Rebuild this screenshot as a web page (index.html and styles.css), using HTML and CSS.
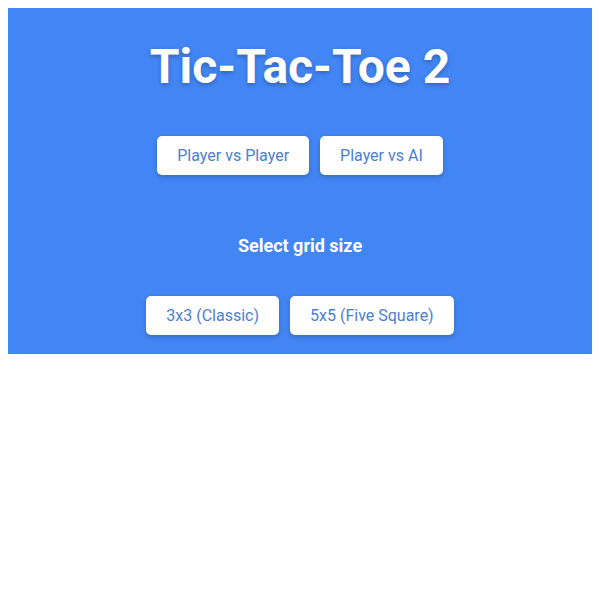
FILE: index.html
```html
<!DOCTYPE html>
<html lang="en">
<head>
<meta charset="utf-8">
<title>Tic-Tac-Toe 2</title>
<link rel="stylesheet" href="styles.css">
</head>
<body>
  <div class="menu">
    <h1 class="title">Tic-Tac-Toe 2</h1>
    <div class="options">
      <button class="btn">Player vs Player</button>
      <button class="btn">Player vs AI</button>
    </div>
    <h2 class="subtitle">Select grid size</h2>
    <div class="options">
      <button class="btn">3x3 (Classic)</button>
      <button class="btn">5x5 (Five Square)</button>
    </div>
  </div>
</body>
</html>
```
FILE: styles.css
```css
body {
  margin: 8px;
  font-family: Roboto, "Liberation Sans", sans-serif;
  background: #fff;
}

.menu {
  background: #4285f4;
  color: #fff;
  text-align: center;
  padding: 20px 20px 19px;
}

.title {
  font-size: 48px;
  font-weight: 700;
  margin: 10px 0 41px;
  text-shadow: 0 2px 4px rgba(0, 0, 0, 0.25);
}

.subtitle {
  font-size: 18px;
  font-weight: 700;
  margin: 60px 0 40px;
}

.options {
  display: flex;
  justify-content: center;
  gap: 11px;
}

.btn {
  font-family: Roboto, "Liberation Sans", sans-serif;
  font-size: 16px;
  color: #4a7fd6;
  background: #fff;
  border: none;
  border-radius: 5px;
  padding: 10px 20px;
  box-shadow: 0 2px 5px rgba(0, 0, 0, 0.2);
  cursor: pointer;
}
```
